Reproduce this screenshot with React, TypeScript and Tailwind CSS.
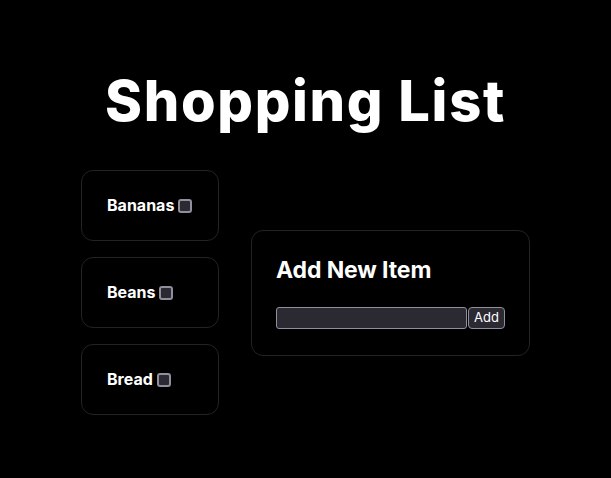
export default function App() {
  const items = ["Bananas", "Beans", "Bread"];

  return (
    <div className="min-h-[478px] bg-black text-white font-['Inter',sans-serif]">
      <h1 className="pt-[68px] text-center text-[56px] font-extrabold leading-[1.2] tracking-[0.03em]">
        Shopping List
      </h1>
      <div className="mt-[35px] flex items-center justify-center gap-[32px]">
        <div className="flex flex-col gap-4">
          {items.map((item) => (
            <div
              key={item}
              className="w-[138px] rounded-xl border border-[#232323] py-[24px] pl-[25px]"
            >
              <label className="flex items-center gap-1 text-base font-bold leading-[21px]">
                {item}
                <span className="inline-block h-[14px] w-[14px] rounded-[3px] border-2 border-[#8f8f9d] bg-[#2b2a33]" />
              </label>
            </div>
          ))}
        </div>
        <div className="w-[279px] rounded-xl border border-[#232323] px-6 pt-[25px] pb-[26px]">
          <h2 className="text-[23px] font-bold leading-[29px] tracking-[-0.005em]">Add New Item</h2>
          <div className="mt-[22px] flex items-center gap-px">
            <input
              type="text"
              className="h-[22px] w-[191px] rounded-[3px] border border-[#8f8f9d] bg-[#2b2a33] px-1 text-[13px] text-white outline-none"
            />
            <button className="h-[22px] w-[37px] rounded-[4px] border border-[#8f8f9d] bg-[#2b2a33] text-[13px] leading-none text-white">
              Add
            </button>
          </div>
        </div>
      </div>
    </div>
  );
}
